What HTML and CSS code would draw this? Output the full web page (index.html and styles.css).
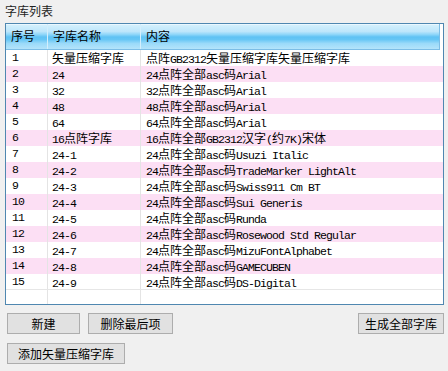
FILE: index.html
```html
<!DOCTYPE html>
<html>
<head>
<meta charset="utf-8">
<link rel="stylesheet" href="styles.css">
</head>
<body>
<div class="title">字库列表</div>
<div class="list">
  <div class="row head">
    <div class="c c1">序号</div><div class="c c2">字库名称</div><div class="c c3">内容</div>
  </div>
  <div class="row"><div class="c c1 m">1</div><div class="c c2">矢量压缩字库</div><div class="c c3">点阵<span class="m">GB2312</span>矢量压缩字库矢量压缩字库</div></div>
  <div class="row alt"><div class="c c1 m">2</div><div class="c c2"><span class="m">24</span></div><div class="c c3"><span class="m">24</span>点阵全部<span class="m">asc</span>码<span class="m">Arial</span></div></div>
  <div class="row"><div class="c c1 m">3</div><div class="c c2"><span class="m">32</span></div><div class="c c3"><span class="m">32</span>点阵全部<span class="m">asc</span>码<span class="m">Arial</span></div></div>
  <div class="row alt"><div class="c c1 m">4</div><div class="c c2"><span class="m">48</span></div><div class="c c3"><span class="m">48</span>点阵全部<span class="m">asc</span>码<span class="m">Arial</span></div></div>
  <div class="row"><div class="c c1 m">5</div><div class="c c2"><span class="m">64</span></div><div class="c c3"><span class="m">64</span>点阵全部<span class="m">asc</span>码<span class="m">Arial</span></div></div>
  <div class="row alt"><div class="c c1 m">6</div><div class="c c2"><span class="m">16</span>点阵字库</div><div class="c c3"><span class="m">16</span>点阵全部<span class="m">GB2312</span>汉字<span class="m">(</span>约<span class="m">7K)</span>宋体</div></div>
  <div class="row"><div class="c c1 m">7</div><div class="c c2"><span class="m">24-1</span></div><div class="c c3"><span class="m">24</span>点阵全部<span class="m">asc</span>码<span class="m">Usuzi Italic</span></div></div>
  <div class="row alt"><div class="c c1 m">8</div><div class="c c2"><span class="m">24-2</span></div><div class="c c3"><span class="m">24</span>点阵全部<span class="m">asc</span>码<span class="m">TradeMarker LightAlt</span></div></div>
  <div class="row"><div class="c c1 m">9</div><div class="c c2"><span class="m">24-3</span></div><div class="c c3"><span class="m">24</span>点阵全部<span class="m">asc</span>码<span class="m">Swiss911 Cm BT</span></div></div>
  <div class="row alt"><div class="c c1 m">10</div><div class="c c2"><span class="m">24-4</span></div><div class="c c3"><span class="m">24</span>点阵全部<span class="m">asc</span>码<span class="m">Sui Generis</span></div></div>
  <div class="row"><div class="c c1 m">11</div><div class="c c2"><span class="m">24-5</span></div><div class="c c3"><span class="m">24</span>点阵全部<span class="m">asc</span>码<span class="m">Runda</span></div></div>
  <div class="row alt"><div class="c c1 m">12</div><div class="c c2"><span class="m">24-6</span></div><div class="c c3"><span class="m">24</span>点阵全部<span class="m">asc</span>码<span class="m">Rosewood Std Regular</span></div></div>
  <div class="row"><div class="c c1 m">13</div><div class="c c2"><span class="m">24-7</span></div><div class="c c3"><span class="m">24</span>点阵全部<span class="m">asc</span>码<span class="m">MizuFontAlphabet</span></div></div>
  <div class="row alt"><div class="c c1 m">14</div><div class="c c2"><span class="m">24-8</span></div><div class="c c3"><span class="m">24</span>点阵全部<span class="m">asc</span>码<span class="m">GAMECUBEN</span></div></div>
  <div class="row last"><div class="c c1 m">15</div><div class="c c2"><span class="m">24-9</span></div><div class="c c3"><span class="m">24</span>点阵全部<span class="m">asc</span>码<span class="m">DS-Digital</span></div></div>
  <div class="row fill"><div class="c c1"></div><div class="c c2"></div><div class="c c3"></div></div>
</div>
<div class="buttons">
  <div class="btnrow">
    <button class="btn b-new">新建</button>
    <button class="btn b-del">删除最后项</button>
    <span class="spacer"></span>
    <button class="btn b-gen">生成全部字库</button>
  </div>
  <div class="btnrow">
    <button class="btn b-add">添加矢量压缩字库</button>
  </div>
</div>
</body>
</html>
```
FILE: styles.css
```css
html, body {
  margin: 0;
  padding: 0;
  background: #f0f0f0;
  width: 448px;
  height: 371px;
  overflow: hidden;
  font-family: "Noto Sans CJK SC", "Noto Sans", sans-serif;
  font-size: 12px;
  color: #000;
}
.title {
  height: 23px;
  line-height: 22px;
  padding-left: 5px;
  color: #1e1e1e;
}
.list {
  margin-left: 5px;
  width: 437px;
  height: 280px;
  border: 1px solid #4f87b0;
  background: #fff;
  display: flex;
  flex-direction: column;
}
.row {
  display: grid;
  grid-template-columns: 42px 93px 1fr;
  height: 16px;
  line-height: 16px;
  white-space: nowrap;
}
.row.alt { background: #fcdff4; }
.row.last { height: 15px; border-bottom: 1px solid #e6e6e6; }
.row.fill { flex: 1; }
.c {
  border-right: 1px solid #e4e4e4;
  overflow: hidden;
}
.c3 { border-right: none; padding-left: 5px; }
.c1 { padding-left: 6px; }
.c2 { padding-left: 4px; }
.head {
  height: 25px;
  line-height: 24px;
  border-bottom: 1px solid #7cbde6;
  background: linear-gradient(to bottom, #d6f1fd 0%, #bde6fb 30%, #8ed6f9 42%, #5fc2f4 52%, #66c6f5 62%, #9bdaf9 78%, #b4e4fb 100%);
  box-shadow: inset 0 1px 0 #eaf8ff;
  margin-right: 3px;
  border-right: 1px solid #7cbde6;
}
.head .c { border-right: 1px solid #d3eefc; padding-left: 5px; }
.head .c3 { border-right: none; }
.m {
  font-family: "Liberation Mono", "DejaVu Sans Mono", monospace;
  font-size: 11.5px;
  letter-spacing: -0.9px;
  white-space: pre;
}
.buttons {
  padding: 8px 4px 0 7px;
  display: flex;
  flex-direction: column;
  gap: 9px;
}
.btnrow {
  display: flex;
  align-items: center;
  gap: 8px;
}
.spacer { flex: 1; }
.btn {
  height: 21px;
  margin: 0;
  padding: 0;
  border: 1px solid #adadad;
  background: #e1e1e1;
  font-family: "Noto Sans CJK SC", "Noto Sans", sans-serif;
  font-size: 12px;
  line-height: 18px;
  color: #000;
}
.b-new { width: 73px; }
.b-del { width: 85px; }
.b-gen { width: 86px; }
.b-add { width: 118px; }
```
